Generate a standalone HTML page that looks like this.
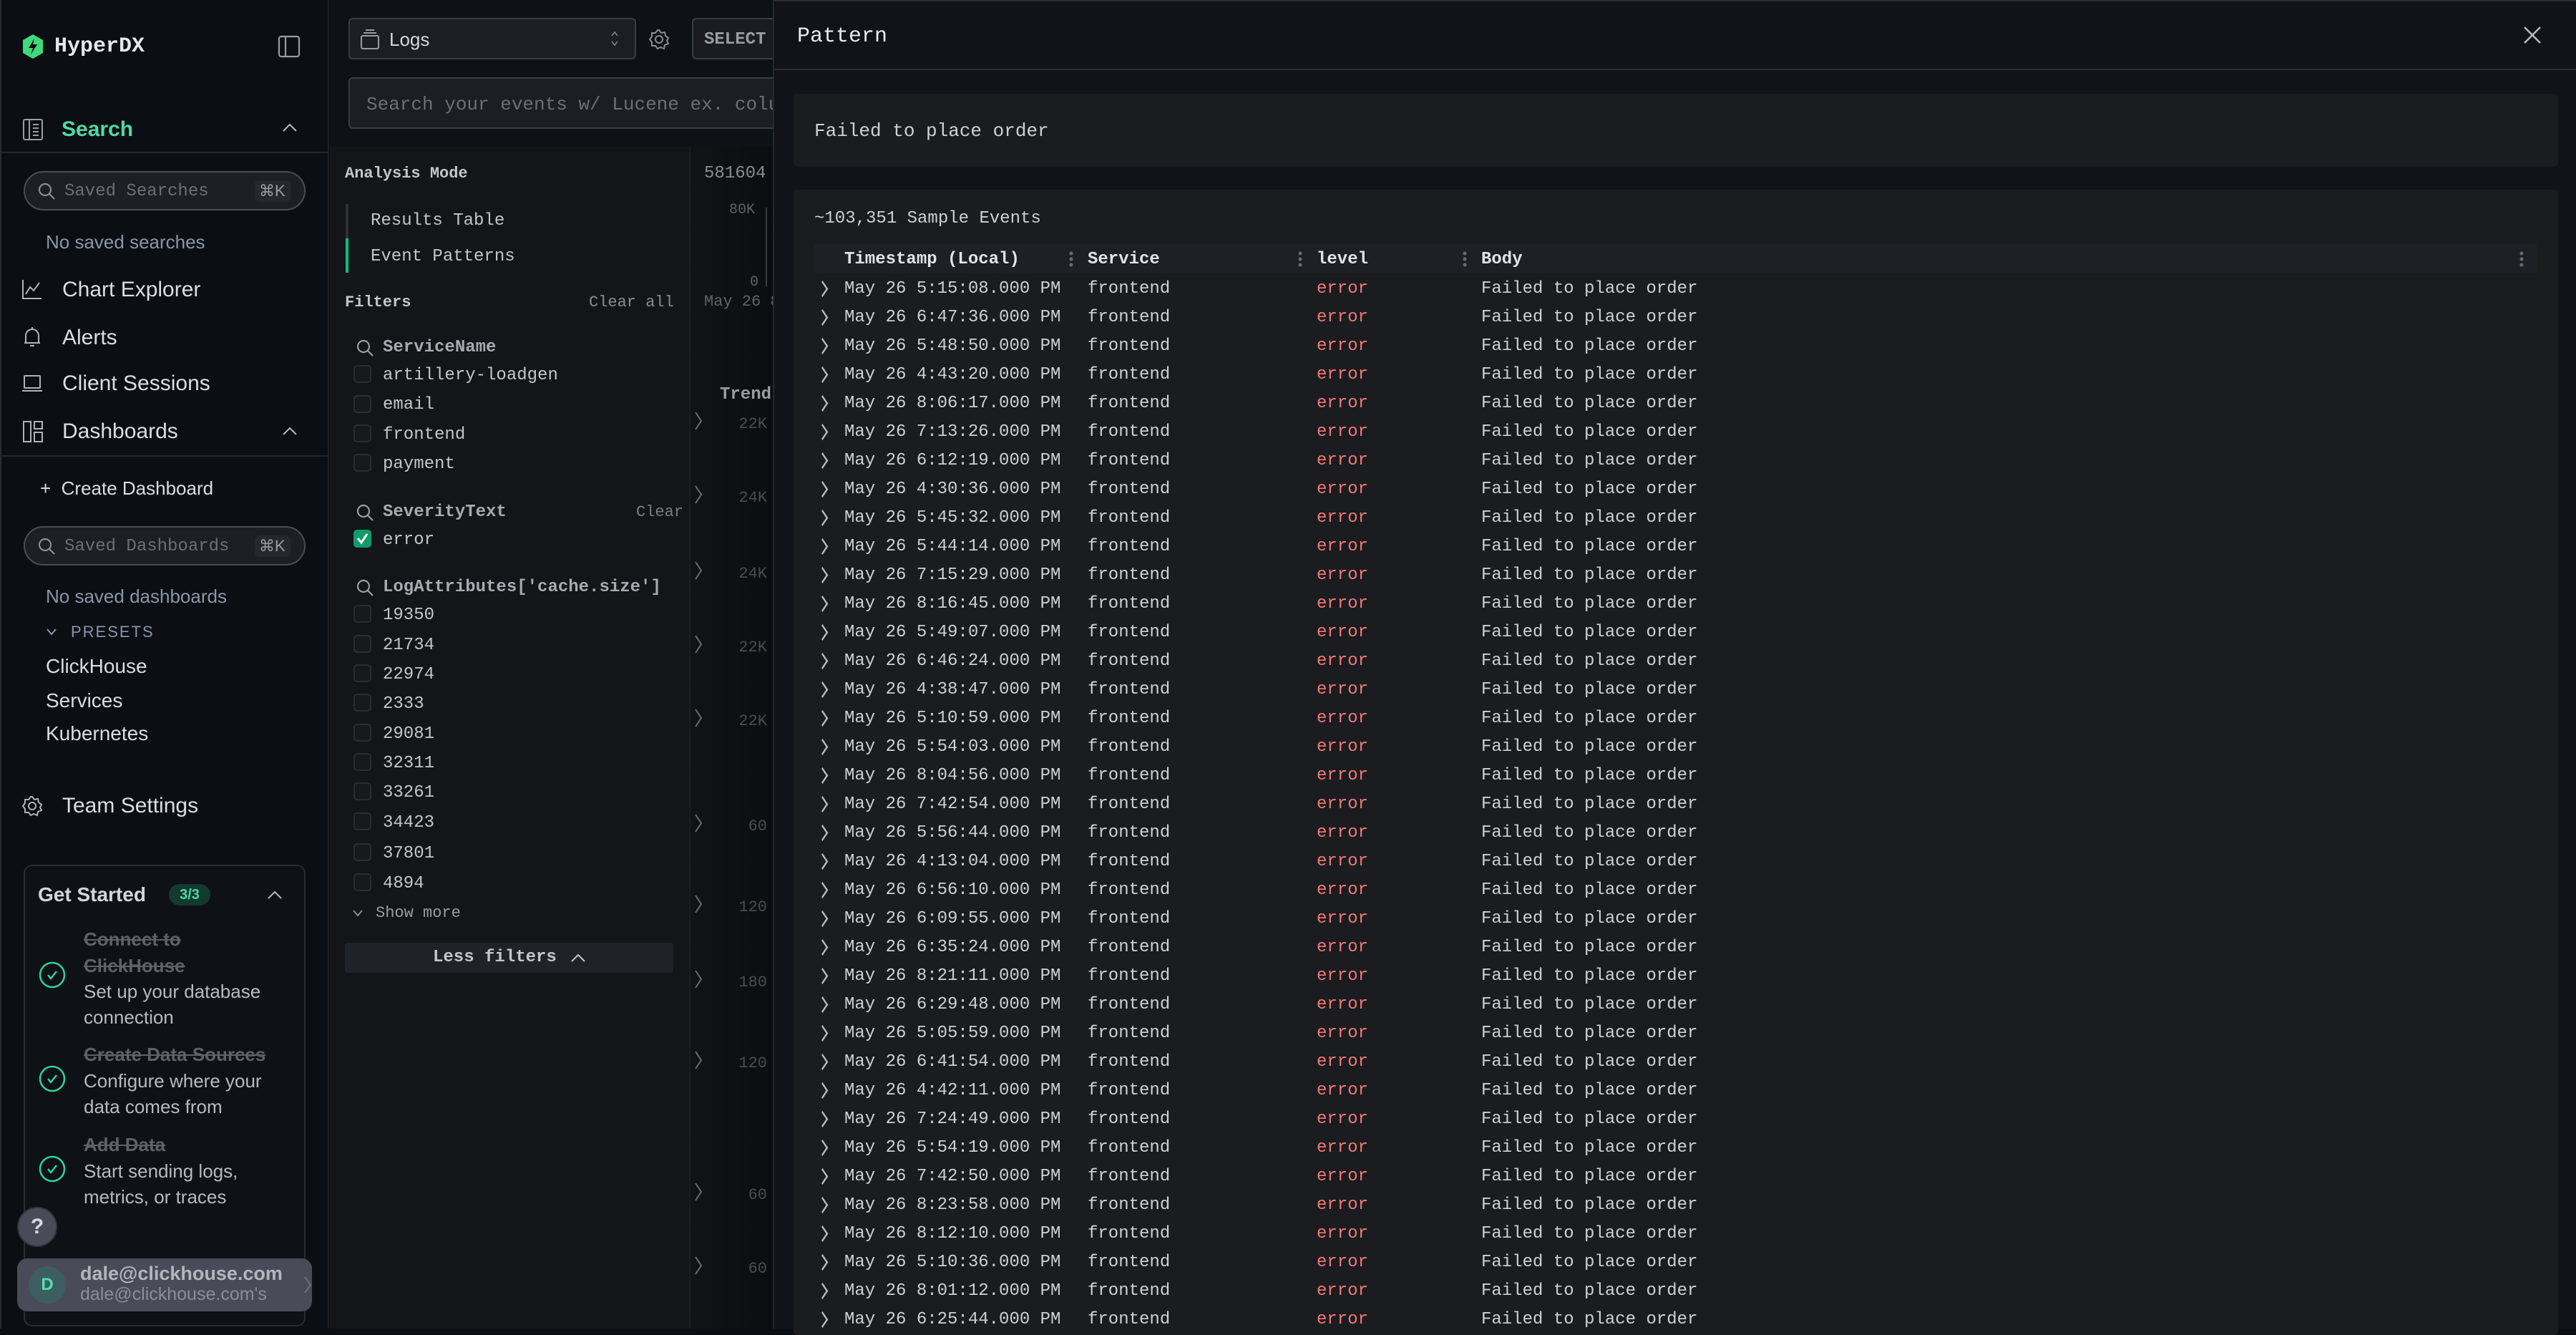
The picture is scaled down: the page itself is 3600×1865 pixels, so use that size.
<!DOCTYPE html>
<html><head><meta charset="utf-8">
<style>
*{box-sizing:border-box;margin:0;padding:0}
body{width:3600px;height:1856px;overflow:hidden;background:#0b0e13;position:relative;font-family:"Liberation Sans",sans-serif;color:#d4d6da}
.a{position:absolute;white-space:nowrap}
.m{font-family:"Liberation Mono",monospace}
.s{font-family:"Liberation Sans",sans-serif}
.cb{position:absolute;width:25px;height:25px;border:2px solid #2a2d33;border-radius:5px;background:#17191d}
.row{position:relative;height:40px;line-height:40px;font-family:"Liberation Mono",monospace;font-size:24px;color:#cfd0d3}
.row span{position:absolute;top:0;white-space:nowrap}
.row i{position:absolute;left:64px;top:14px;width:11px;height:11px}
.row i::before{content:"";position:absolute;left:0;top:0;width:9px;height:9px;border-top:2px solid #b8bac0;border-right:2px solid #b8bac0;transform:scaleY(1.5) rotate(45deg)}
</style></head><body>

<!-- SIDEBAR -->
<div class="a" style="left:0;top:0;width:460px;height:1856px;background:#0b0e13;border-right:2px solid #1c1f25;border-left:2px solid #2a2c31"></div>
<svg class="a" style="left:30px;top:47px" width="32" height="36" viewBox="0 0 32 36"><polygon points="16,1 30,9 30,27 16,35 2,27 2,9" fill="#3fd97a"/><path d="M18 7 L10 20 H16 L13 29 L22 15 H16 Z" fill="#0b0e13"/></svg>
<div class="a m" style="left:76px;top:45px;font-size:30px;font-weight:bold;color:#e8e8ea;line-height:40px">HyperDX</div>
<svg class="a" style="left:388px;top:49px" width="32" height="32" viewBox="0 0 32 32" fill="none" stroke="#9a9ca2" stroke-width="2.2"><rect x="2" y="2" width="28" height="28" rx="3"/><line x1="11" y1="2" x2="11" y2="30"/></svg>

<svg class="a" style="left:32px;top:166px" width="28" height="30" viewBox="0 0 28 30" fill="none" stroke="#9a9ca2" stroke-width="2"><rect x="1" y="1" width="26" height="28" rx="2"/><line x1="9" y1="1" x2="9" y2="29"/><line x1="14" y1="8" x2="22" y2="8"/><line x1="14" y1="13" x2="22" y2="13"/><line x1="14" y1="18" x2="22" y2="18"/><line x1="14" y1="23" x2="22" y2="23"/></svg>
<div class="a s" style="left:86px;top:161px;font-size:30px;font-weight:bold;color:#4fd8a4;line-height:40px">Search</div>
<svg class="a" style="left:394px;top:171px" width="22" height="14" viewBox="0 0 22 14" fill="none" stroke="#b8bac0" stroke-width="2"><path d="M2 12 L11 3 L20 12"/></svg>
<div class="a" style="left:2px;top:212px;width:456px;height:2px;background:#22252b"></div>

<div class="a" style="left:33px;top:239px;width:394px;height:55px;border:2px solid #4a4d55;border-radius:28px;background:#1d1f24"></div>
<svg class="a" style="left:52px;top:254px" width="26" height="26" viewBox="0 0 26 26" fill="none" stroke="#8a8d94" stroke-width="2.2"><circle cx="11" cy="11" r="8"/><line x1="17" y1="17" x2="24" y2="24"/></svg>
<div class="a m" style="left:90px;top:248px;font-size:24px;color:#6c6f76;line-height:40px">Saved Searches</div>
<div class="a" style="left:356px;top:252px;width:50px;height:30px;background:#26282e;border-radius:6px"></div>
<div class="a s" style="left:362px;top:247px;font-size:22px;color:#9a9ca2;line-height:40px">⌘K</div>
<div class="a s" style="left:64px;top:318px;font-size:26px;color:#8a95a8;line-height:40px">No saved searches</div>

<svg class="a" style="left:30px;top:389px" width="30" height="30" viewBox="0 0 30 30" fill="none" stroke="#b0b2b8" stroke-width="2"><path d="M2 2 V28 H28"/><path d="M6 22 L12 12 L17 17 L25 6"/></svg>
<div class="a s" style="left:87px;top:385px;font-size:30px;color:#dcdde0;line-height:40px">Chart Explorer</div>
<svg class="a" style="left:32px;top:455px" width="26" height="32" viewBox="0 0 26 32" fill="none" stroke="#b0b2b8" stroke-width="2"><path d="M4 24 V14 A9 9 0 0 1 22 14 V24 H4 Z M2 24 H24"/><path d="M10 28 H16"/><line x1="13" y1="2" x2="13" y2="5"/></svg>
<div class="a s" style="left:87px;top:452px;font-size:30px;color:#dcdde0;line-height:40px">Alerts</div>
<svg class="a" style="left:30px;top:523px" width="30" height="26" viewBox="0 0 30 26" fill="none" stroke="#b0b2b8" stroke-width="2"><rect x="4" y="2" width="22" height="17" rx="1"/><line x1="1" y1="23" x2="29" y2="23"/></svg>
<div class="a s" style="left:87px;top:516px;font-size:30px;color:#dcdde0;line-height:40px">Client Sessions</div>
<svg class="a" style="left:32px;top:588px" width="28" height="30" viewBox="0 0 28 30" fill="none" stroke="#b0b2b8" stroke-width="2"><rect x="1" y="1" width="10" height="28"/><rect x="16" y="1" width="11" height="10"/><rect x="16" y="16" width="11" height="13"/></svg>
<div class="a s" style="left:87px;top:583px;font-size:30px;color:#dcdde0;line-height:40px">Dashboards</div>
<svg class="a" style="left:394px;top:595px" width="22" height="14" viewBox="0 0 22 14" fill="none" stroke="#b8bac0" stroke-width="2"><path d="M2 12 L11 3 L20 12"/></svg>
<div class="a" style="left:2px;top:636px;width:456px;height:2px;background:#22252b"></div>

<div class="a s" style="left:56px;top:662px;font-size:26px;color:#dcdde0;line-height:40px">+&nbsp; Create Dashboard</div>
<div class="a" style="left:33px;top:735px;width:394px;height:55px;border:2px solid #4a4d55;border-radius:28px;background:#1d1f24"></div>
<svg class="a" style="left:52px;top:750px" width="26" height="26" viewBox="0 0 26 26" fill="none" stroke="#8a8d94" stroke-width="2.2"><circle cx="11" cy="11" r="8"/><line x1="17" y1="17" x2="24" y2="24"/></svg>
<div class="a m" style="left:90px;top:744px;font-size:24px;color:#6c6f76;line-height:40px">Saved Dashboards</div>
<div class="a" style="left:356px;top:748px;width:50px;height:30px;background:#26282e;border-radius:6px"></div>
<div class="a s" style="left:362px;top:743px;font-size:22px;color:#9a9ca2;line-height:40px">⌘K</div>
<div class="a s" style="left:64px;top:813px;font-size:26px;color:#8a95a8;line-height:40px">No saved dashboards</div>
<svg class="a" style="left:64px;top:877px" width="16" height="12" viewBox="0 0 16 12" fill="none" stroke="#8a95a8" stroke-width="2"><path d="M2 2 L8 9 L14 2"/></svg>
<div class="a s" style="left:99px;top:863px;font-size:22px;color:#8a95a8;letter-spacing:2px;line-height:40px">PRESETS</div>
<div class="a s" style="left:64px;top:911px;font-size:28px;color:#dcdde0;line-height:40px">ClickHouse</div>
<div class="a s" style="left:64px;top:959px;font-size:28px;color:#dcdde0;line-height:40px">Services</div>
<div class="a s" style="left:64px;top:1005px;font-size:28px;color:#dcdde0;line-height:40px">Kubernetes</div>

<svg class="a" style="left:30px;top:1111px" width="30" height="30" viewBox="0 0 30 30" fill="none" stroke="#b0b2b8" stroke-width="2"><circle cx="15" cy="15" r="5"/><path d="M15 2 L18 6 L23 5 L24 10 L28 13 L26 17 L28 21 L23 23 L22 28 L17 26 L13 28 L10 24 L5 24 L5 19 L2 15 L5 11 L5 6 L10 6 L13 2 Z"/></svg>
<div class="a s" style="left:87px;top:1106px;font-size:30px;color:#dcdde0;line-height:40px">Team Settings</div>

<div class="a" style="left:33px;top:1208px;width:394px;height:645px;border:2px solid #2a2d33;border-radius:12px;background:#0e1116"></div>
<div class="a s" style="left:53px;top:1230px;font-size:28px;font-weight:bold;color:#d4d6da;line-height:40px">Get Started</div>
<div class="a s" style="left:236px;top:1235px;width:58px;height:30px;border-radius:15px;background:#133a2e;color:#4fd8a4;font-size:20px;font-weight:bold;text-align:center;line-height:30px">3/3</div>
<svg class="a" style="left:373px;top:1243px" width="22" height="14" viewBox="0 0 22 14" fill="none" stroke="#b8bac0" stroke-width="2"><path d="M2 12 L11 3 L20 12"/></svg>
<div class="a s" style="left:117px;top:1294px;font-size:26px;font-weight:bold;color:#5f6167;text-decoration:line-through;line-height:37px;white-space:normal;width:300px">Connect to<br>ClickHouse</div>
<div class="a s" style="left:117px;top:1367px;font-size:26px;color:#b8bac0;line-height:36px">Set up your database<br>connection</div>
<div class="a s" style="left:117px;top:1455px;font-size:26px;font-weight:bold;color:#5f6167;text-decoration:line-through;line-height:37px">Create Data Sources</div>
<div class="a s" style="left:117px;top:1492px;font-size:26px;color:#b8bac0;line-height:36px">Configure where your<br>data comes from</div>
<div class="a s" style="left:117px;top:1581px;font-size:26px;font-weight:bold;color:#5f6167;text-decoration:line-through;line-height:37px">Add Data</div>
<div class="a s" style="left:117px;top:1618px;font-size:26px;color:#b8bac0;line-height:36px">Start sending logs,<br>metrics, or traces</div>
<svg class="a" style="left:53px;top:1342px" width="40" height="40" viewBox="0 0 40 40" fill="none" stroke="#2fd49a" stroke-width="2.5"><circle cx="20" cy="20" r="17"/><path d="M14 20 L18 25 L26 15"/></svg>
<svg class="a" style="left:53px;top:1487px" width="40" height="40" viewBox="0 0 40 40" fill="none" stroke="#2fd49a" stroke-width="2.5"><circle cx="20" cy="20" r="17"/><path d="M14 20 L18 25 L26 15"/></svg>
<svg class="a" style="left:53px;top:1613px" width="40" height="40" viewBox="0 0 40 40" fill="none" stroke="#2fd49a" stroke-width="2.5"><circle cx="20" cy="20" r="17"/><path d="M14 20 L18 25 L26 15"/></svg>

<div class="a s" style="left:24px;top:1686px;width:56px;height:56px;border-radius:28px;background:#4a4b58;border:2px solid #34353e;color:#d8d8de;font-size:30px;text-align:center;line-height:52px;font-weight:bold">?</div>
<div class="a" style="left:24px;top:1758px;width:412px;height:74px;border-radius:14px;background:#4a4b58"></div>
<div class="a s" style="left:40px;top:1769px;width:52px;height:52px;border-radius:26px;background:#3d5e60;color:#4fe0b0;font-size:24px;font-weight:bold;text-align:center;line-height:52px">D</div>
<div class="a s" style="left:112px;top:1762px;font-size:27px;font-weight:bold;color:#b4b5bd;line-height:34px">dale@clickhouse.com</div>
<div class="a s" style="left:112px;top:1792px;font-size:25px;color:#8c8d97;line-height:32px">dale@clickhouse.com's</div>
<svg class="a" style="left:424px;top:1782px" width="12" height="26" viewBox="0 0 12 26" fill="none" stroke="#6c6d77" stroke-width="2"><path d="M2 2 L10 13 L2 24"/></svg>

<!-- MIDDLE PANEL -->
<div class="a" style="left:461px;top:0;width:619px;height:205px;background:#0e1116"></div>
<div class="a" style="left:461px;top:205px;width:502px;height:1651px;background:#131519"></div>
<div class="a" style="left:963px;top:205px;width:117px;height:1651px;background:linear-gradient(90deg,#111317,#0b0d11);border-left:2px solid #1a1c20"></div>

<div class="a" style="left:487px;top:25px;width:402px;height:58px;border:2px solid #3a3d44;border-radius:6px;background:#1c1e23"></div>
<svg class="a" style="left:503px;top:40px" width="28" height="30" viewBox="0 0 28 30" fill="none" stroke="#9a9ca2" stroke-width="2"><rect x="2" y="10" width="24" height="18" rx="2"/><line x1="5" y1="6" x2="23" y2="6"/><line x1="8" y1="2" x2="20" y2="2"/></svg>
<div class="a s" style="left:544px;top:35px;font-size:26px;color:#d4d6da;line-height:40px">Logs</div>
<svg class="a" style="left:852px;top:40px" width="14" height="28" viewBox="0 0 14 28" fill="none" stroke="#7a7c82" stroke-width="1.8"><path d="M3 10 L7 5 L11 10 M3 18 L7 23 L11 18"/></svg>
<svg class="a" style="left:906px;top:40px" width="30" height="30" viewBox="0 0 30 30" fill="none" stroke="#8a8c92" stroke-width="2"><circle cx="15" cy="15" r="5"/><path d="M15 2 L18 6 L23 5 L24 10 L28 13 L26 17 L28 21 L23 23 L22 28 L17 26 L13 28 L10 24 L5 24 L5 19 L2 15 L5 11 L5 6 L10 6 L13 2 Z"/></svg>
<div class="a" style="left:967px;top:25px;width:130px;height:58px;border:2px solid #3a3d44;border-radius:6px;background:#1a1c21"></div>
<div class="a m" style="left:984px;top:36px;font-size:24px;font-weight:bold;color:#9a9ca2;line-height:40px">SELECT</div>
<div class="a" style="left:487px;top:108px;width:620px;height:72px;border:2px solid #3a3d44;border-radius:6px;background:#1c1e23"></div>
<div class="a m" style="left:512px;top:126px;font-size:26px;color:#6c6f76;line-height:40px">Search your events w/ Lucene ex. column:foo</div>

<div class="a m" style="left:482px;top:223px;font-size:22px;font-weight:bold;color:#c4c6ca;line-height:40px">Analysis Mode</div>
<div class="a" style="left:483px;top:285px;width:4px;height:48px;background:#2e3137"></div>
<div class="a" style="left:483px;top:333px;width:4px;height:48px;background:#0fbd7e"></div>
<div class="a m" style="left:518px;top:289px;font-size:24px;color:#c4c6ca;line-height:40px">Results Table</div>
<div class="a m" style="left:518px;top:339px;font-size:24px;color:#c4c6ca;line-height:40px">Event Patterns</div>
<div class="a m" style="left:482px;top:403px;font-size:22px;font-weight:bold;color:#c4c6ca;line-height:40px">Filters</div>
<div class="a m" style="left:823px;top:403px;font-size:22px;color:#8a8c92;line-height:40px">Clear all</div>

<svg class="a" style="left:497px;top:473px" width="26" height="26" viewBox="0 0 26 26" fill="none" stroke="#9a9ca2" stroke-width="2.2"><circle cx="11" cy="11" r="8"/><line x1="17" y1="17" x2="24" y2="24"/></svg>
<div class="a m" style="left:535px;top:466px;font-size:24px;font-weight:bold;color:#a8aab0;line-height:40px">ServiceName</div>
<div class="cb" style="left:494px;top:510px"></div><div class="a m" style="left:535px;top:505px;font-size:24px;color:#c4c6ca;line-height:40px">artillery-loadgen</div>
<div class="cb" style="left:494px;top:552px"></div><div class="a m" style="left:535px;top:546px;font-size:24px;color:#c4c6ca;line-height:40px">email</div>
<div class="cb" style="left:494px;top:593px"></div><div class="a m" style="left:535px;top:588px;font-size:24px;color:#c4c6ca;line-height:40px">frontend</div>
<div class="cb" style="left:494px;top:634px"></div><div class="a m" style="left:535px;top:629px;font-size:24px;color:#c4c6ca;line-height:40px">payment</div>

<svg class="a" style="left:497px;top:703px" width="26" height="26" viewBox="0 0 26 26" fill="none" stroke="#9a9ca2" stroke-width="2.2"><circle cx="11" cy="11" r="8"/><line x1="17" y1="17" x2="24" y2="24"/></svg>
<div class="a m" style="left:535px;top:696px;font-size:24px;font-weight:bold;color:#a8aab0;line-height:40px">SeverityText</div>
<div class="a m" style="left:889px;top:696px;font-size:22px;color:#7a7c82;line-height:40px">Clear</div>
<div class="a" style="left:494px;top:740px;width:25px;height:25px;border-radius:5px;background:#0f9c6a"></div>
<svg class="a" style="left:497px;top:743px" width="19" height="19" viewBox="0 0 19 19" fill="none" stroke="#fff" stroke-width="3"><path d="M3 9 L8 15 L16 3"/></svg>
<div class="a m" style="left:535px;top:735px;font-size:24px;color:#c4c6ca;line-height:40px">error</div>

<svg class="a" style="left:497px;top:808px" width="26" height="26" viewBox="0 0 26 26" fill="none" stroke="#9a9ca2" stroke-width="2.2"><circle cx="11" cy="11" r="8"/><line x1="17" y1="17" x2="24" y2="24"/></svg>
<div class="a m" style="left:535px;top:801px;font-size:24px;font-weight:bold;color:#a8aab0;line-height:40px">LogAttributes['cache.size']</div>
<div class="cb" style="left:494px;top:845px"></div><div class="a m" style="left:535px;top:840px;font-size:24px;color:#c4c6ca;line-height:40px">19350</div>
<div class="cb" style="left:494px;top:887px"></div><div class="a m" style="left:535px;top:882px;font-size:24px;color:#c4c6ca;line-height:40px">21734</div>
<div class="cb" style="left:494px;top:928px"></div><div class="a m" style="left:535px;top:923px;font-size:24px;color:#c4c6ca;line-height:40px">22974</div>
<div class="cb" style="left:494px;top:969px"></div><div class="a m" style="left:535px;top:964px;font-size:24px;color:#c4c6ca;line-height:40px">2333</div>
<div class="cb" style="left:494px;top:1011px"></div><div class="a m" style="left:535px;top:1006px;font-size:24px;color:#c4c6ca;line-height:40px">29081</div>
<div class="cb" style="left:494px;top:1052px"></div><div class="a m" style="left:535px;top:1047px;font-size:24px;color:#c4c6ca;line-height:40px">32311</div>
<div class="cb" style="left:494px;top:1093px"></div><div class="a m" style="left:535px;top:1088px;font-size:24px;color:#c4c6ca;line-height:40px">33261</div>
<div class="cb" style="left:494px;top:1135px"></div><div class="a m" style="left:535px;top:1130px;font-size:24px;color:#c4c6ca;line-height:40px">34423</div>
<div class="cb" style="left:494px;top:1178px"></div><div class="a m" style="left:535px;top:1173px;font-size:24px;color:#c4c6ca;line-height:40px">37801</div>
<div class="cb" style="left:494px;top:1220px"></div><div class="a m" style="left:535px;top:1215px;font-size:24px;color:#c4c6ca;line-height:40px">4894</div>
<svg class="a" style="left:492px;top:1270px" width="16" height="12" viewBox="0 0 16 12" fill="none" stroke="#8a8c92" stroke-width="2"><path d="M2 2 L8 9 L14 2"/></svg>
<div class="a m" style="left:525px;top:1256px;font-size:22px;color:#9a9ca2;line-height:40px">Show more</div>
<div class="a" style="left:482px;top:1317px;width:459px;height:42px;border-radius:4px;background:#1f2229"></div>
<div class="a m" style="left:605px;top:1318px;font-size:24px;font-weight:bold;color:#c4c6ca;line-height:40px">Less filters</div>
<svg class="a" style="left:797px;top:1331px" width="22" height="14" viewBox="0 0 22 14" fill="none" stroke="#c4c6ca" stroke-width="2"><path d="M2 12 L11 3 L20 12"/></svg>

<div class="a m" style="left:984px;top:223px;font-size:24px;color:#8a8c92;line-height:40px">581604</div>
<div class="a m" style="left:1019px;top:277px;font-size:20px;color:#606268;line-height:34px">80K</div>
<div class="a" style="left:1070px;top:290px;width:2px;height:110px;background:#3a3c42"></div>
<div class="a m" style="left:1048px;top:378px;font-size:20px;color:#606268;line-height:34px">0</div>
<div class="a m" style="left:984px;top:404px;font-size:22px;color:#606268;line-height:36px">May 26 8</div>
<div class="a m" style="left:1006px;top:532px;font-size:24px;font-weight:bold;color:#9a9ca2;line-height:40px">Trend</div>
<svg class="a" style="left:970px;top:0" width="110" height="1856" viewBox="0 0 110 1856" fill="none" stroke="#6a6c72" stroke-width="2">
<path d="M2 576 L10 588 L2 600 M2 679 L10 691 L2 703 M2 785 L10 797 L2 809 M2 888 L10 900 L2 912 M2 991 L10 1003 L2 1015 M2 1138 L10 1150 L2 1162 M2 1251 L10 1263 L2 1275 M2 1356 L10 1368 L2 1380 M2 1469 L10 1481 L2 1493 M2 1653 L10 1665 L2 1677 M2 1756 L10 1768 L2 1780"/>
<g font-family="Liberation Mono,monospace" font-size="22" fill="#4a4c52" stroke="none" text-anchor="end">
<text x="102" y="598">22K</text><text x="102" y="701">24K</text><text x="102" y="807">24K</text><text x="102" y="910">22K</text><text x="102" y="1013">22K</text><text x="102" y="1160">60</text><text x="102" y="1273">120</text><text x="102" y="1378">180</text><text x="102" y="1491">120</text><text x="102" y="1675">60</text><text x="102" y="1778">60</text></g>
</svg>

<!-- DRAWER -->
<div class="a" style="left:1080px;top:0;width:2520px;height:1856px;background:#111318;border-left:2px solid #25282e;border-top:2px solid #2a2c31"></div>
<div class="a m" style="left:1114px;top:31px;font-size:30px;color:#e8e9eb;line-height:40px">Pattern</div>
<svg class="a" style="left:3526px;top:36px" width="26" height="26" viewBox="0 0 26 26" fill="none" stroke="#b8bac0" stroke-width="2.5"><path d="M2 2 L24 24 M24 2 L2 24"/></svg>
<div class="a" style="left:1082px;top:96px;width:2518px;height:2px;background:#2a2c31"></div>

<div class="a" style="left:1109px;top:131px;width:2466px;height:102px;border-radius:6px;background:#1b1c20"></div>
<div class="a m" style="left:1138px;top:163px;font-size:26px;color:#cfd0d3;line-height:40px">Failed to place order</div>

<div class="a" style="left:1109px;top:265px;width:2466px;height:1600px;border-radius:6px;background:#1b1c20"></div>
<div class="a m" style="left:1138px;top:286px;font-size:24px;color:#cfd0d3;line-height:40px">~103,351 Sample Events</div>
<div class="a" style="left:1137px;top:341px;width:2408px;height:40px;background:#1e2025"></div>
<div class="a m" style="left:1180px;top:343px;font-size:24px;font-weight:bold;color:#e2e3e6;line-height:40px">Timestamp (Local)</div>
<div class="a m" style="left:1520px;top:343px;font-size:24px;font-weight:bold;color:#e2e3e6;line-height:40px">Service</div>
<div class="a m" style="left:1840px;top:343px;font-size:24px;font-weight:bold;color:#e2e3e6;line-height:40px">level</div>
<div class="a m" style="left:2070px;top:343px;font-size:24px;font-weight:bold;color:#e2e3e6;line-height:40px">Body</div>
<svg class="a" style="left:0;top:350px" width="3600" height="24" viewBox="0 0 3600 24" fill="#6a6c72"><g><circle cx="1497" cy="4" r="2.5"/><circle cx="1497" cy="12" r="2.5"/><circle cx="1497" cy="20" r="2.5"/><circle cx="1817" cy="4" r="2.5"/><circle cx="1817" cy="12" r="2.5"/><circle cx="1817" cy="20" r="2.5"/><circle cx="2047" cy="4" r="2.5"/><circle cx="2047" cy="12" r="2.5"/><circle cx="2047" cy="20" r="2.5"/><circle cx="3524" cy="4" r="2.5"/><circle cx="3524" cy="12" r="2.5"/><circle cx="3524" cy="20" r="2.5"/></g></svg>

<div class="a" style="left:1080px;top:384px;width:2500px">
<div class="row"><i></i><span style="left:100px">May 26 5:15:08.000 PM</span><span style="left:440px">frontend</span><span style="left:760px;color:#f07878">error</span><span style="left:990px">Failed to place order</span></div>
<div class="row"><i></i><span style="left:100px">May 26 6:47:36.000 PM</span><span style="left:440px">frontend</span><span style="left:760px;color:#f07878">error</span><span style="left:990px">Failed to place order</span></div>
<div class="row"><i></i><span style="left:100px">May 26 5:48:50.000 PM</span><span style="left:440px">frontend</span><span style="left:760px;color:#f07878">error</span><span style="left:990px">Failed to place order</span></div>
<div class="row"><i></i><span style="left:100px">May 26 4:43:20.000 PM</span><span style="left:440px">frontend</span><span style="left:760px;color:#f07878">error</span><span style="left:990px">Failed to place order</span></div>
<div class="row"><i></i><span style="left:100px">May 26 8:06:17.000 PM</span><span style="left:440px">frontend</span><span style="left:760px;color:#f07878">error</span><span style="left:990px">Failed to place order</span></div>
<div class="row"><i></i><span style="left:100px">May 26 7:13:26.000 PM</span><span style="left:440px">frontend</span><span style="left:760px;color:#f07878">error</span><span style="left:990px">Failed to place order</span></div>
<div class="row"><i></i><span style="left:100px">May 26 6:12:19.000 PM</span><span style="left:440px">frontend</span><span style="left:760px;color:#f07878">error</span><span style="left:990px">Failed to place order</span></div>
<div class="row"><i></i><span style="left:100px">May 26 4:30:36.000 PM</span><span style="left:440px">frontend</span><span style="left:760px;color:#f07878">error</span><span style="left:990px">Failed to place order</span></div>
<div class="row"><i></i><span style="left:100px">May 26 5:45:32.000 PM</span><span style="left:440px">frontend</span><span style="left:760px;color:#f07878">error</span><span style="left:990px">Failed to place order</span></div>
<div class="row"><i></i><span style="left:100px">May 26 5:44:14.000 PM</span><span style="left:440px">frontend</span><span style="left:760px;color:#f07878">error</span><span style="left:990px">Failed to place order</span></div>
<div class="row"><i></i><span style="left:100px">May 26 7:15:29.000 PM</span><span style="left:440px">frontend</span><span style="left:760px;color:#f07878">error</span><span style="left:990px">Failed to place order</span></div>
<div class="row"><i></i><span style="left:100px">May 26 8:16:45.000 PM</span><span style="left:440px">frontend</span><span style="left:760px;color:#f07878">error</span><span style="left:990px">Failed to place order</span></div>
<div class="row"><i></i><span style="left:100px">May 26 5:49:07.000 PM</span><span style="left:440px">frontend</span><span style="left:760px;color:#f07878">error</span><span style="left:990px">Failed to place order</span></div>
<div class="row"><i></i><span style="left:100px">May 26 6:46:24.000 PM</span><span style="left:440px">frontend</span><span style="left:760px;color:#f07878">error</span><span style="left:990px">Failed to place order</span></div>
<div class="row"><i></i><span style="left:100px">May 26 4:38:47.000 PM</span><span style="left:440px">frontend</span><span style="left:760px;color:#f07878">error</span><span style="left:990px">Failed to place order</span></div>
<div class="row"><i></i><span style="left:100px">May 26 5:10:59.000 PM</span><span style="left:440px">frontend</span><span style="left:760px;color:#f07878">error</span><span style="left:990px">Failed to place order</span></div>
<div class="row"><i></i><span style="left:100px">May 26 5:54:03.000 PM</span><span style="left:440px">frontend</span><span style="left:760px;color:#f07878">error</span><span style="left:990px">Failed to place order</span></div>
<div class="row"><i></i><span style="left:100px">May 26 8:04:56.000 PM</span><span style="left:440px">frontend</span><span style="left:760px;color:#f07878">error</span><span style="left:990px">Failed to place order</span></div>
<div class="row"><i></i><span style="left:100px">May 26 7:42:54.000 PM</span><span style="left:440px">frontend</span><span style="left:760px;color:#f07878">error</span><span style="left:990px">Failed to place order</span></div>
<div class="row"><i></i><span style="left:100px">May 26 5:56:44.000 PM</span><span style="left:440px">frontend</span><span style="left:760px;color:#f07878">error</span><span style="left:990px">Failed to place order</span></div>
<div class="row"><i></i><span style="left:100px">May 26 4:13:04.000 PM</span><span style="left:440px">frontend</span><span style="left:760px;color:#f07878">error</span><span style="left:990px">Failed to place order</span></div>
<div class="row"><i></i><span style="left:100px">May 26 6:56:10.000 PM</span><span style="left:440px">frontend</span><span style="left:760px;color:#f07878">error</span><span style="left:990px">Failed to place order</span></div>
<div class="row"><i></i><span style="left:100px">May 26 6:09:55.000 PM</span><span style="left:440px">frontend</span><span style="left:760px;color:#f07878">error</span><span style="left:990px">Failed to place order</span></div>
<div class="row"><i></i><span style="left:100px">May 26 6:35:24.000 PM</span><span style="left:440px">frontend</span><span style="left:760px;color:#f07878">error</span><span style="left:990px">Failed to place order</span></div>
<div class="row"><i></i><span style="left:100px">May 26 8:21:11.000 PM</span><span style="left:440px">frontend</span><span style="left:760px;color:#f07878">error</span><span style="left:990px">Failed to place order</span></div>
<div class="row"><i></i><span style="left:100px">May 26 6:29:48.000 PM</span><span style="left:440px">frontend</span><span style="left:760px;color:#f07878">error</span><span style="left:990px">Failed to place order</span></div>
<div class="row"><i></i><span style="left:100px">May 26 5:05:59.000 PM</span><span style="left:440px">frontend</span><span style="left:760px;color:#f07878">error</span><span style="left:990px">Failed to place order</span></div>
<div class="row"><i></i><span style="left:100px">May 26 6:41:54.000 PM</span><span style="left:440px">frontend</span><span style="left:760px;color:#f07878">error</span><span style="left:990px">Failed to place order</span></div>
<div class="row"><i></i><span style="left:100px">May 26 4:42:11.000 PM</span><span style="left:440px">frontend</span><span style="left:760px;color:#f07878">error</span><span style="left:990px">Failed to place order</span></div>
<div class="row"><i></i><span style="left:100px">May 26 7:24:49.000 PM</span><span style="left:440px">frontend</span><span style="left:760px;color:#f07878">error</span><span style="left:990px">Failed to place order</span></div>
<div class="row"><i></i><span style="left:100px">May 26 5:54:19.000 PM</span><span style="left:440px">frontend</span><span style="left:760px;color:#f07878">error</span><span style="left:990px">Failed to place order</span></div>
<div class="row"><i></i><span style="left:100px">May 26 7:42:50.000 PM</span><span style="left:440px">frontend</span><span style="left:760px;color:#f07878">error</span><span style="left:990px">Failed to place order</span></div>
<div class="row"><i></i><span style="left:100px">May 26 8:23:58.000 PM</span><span style="left:440px">frontend</span><span style="left:760px;color:#f07878">error</span><span style="left:990px">Failed to place order</span></div>
<div class="row"><i></i><span style="left:100px">May 26 8:12:10.000 PM</span><span style="left:440px">frontend</span><span style="left:760px;color:#f07878">error</span><span style="left:990px">Failed to place order</span></div>
<div class="row"><i></i><span style="left:100px">May 26 5:10:36.000 PM</span><span style="left:440px">frontend</span><span style="left:760px;color:#f07878">error</span><span style="left:990px">Failed to place order</span></div>
<div class="row"><i></i><span style="left:100px">May 26 8:01:12.000 PM</span><span style="left:440px">frontend</span><span style="left:760px;color:#f07878">error</span><span style="left:990px">Failed to place order</span></div>
<div class="row"><i></i><span style="left:100px">May 26 6:25:44.000 PM</span><span style="left:440px">frontend</span><span style="left:760px;color:#f07878">error</span><span style="left:990px">Failed to place order</span></div>
</div>
</body></html>
